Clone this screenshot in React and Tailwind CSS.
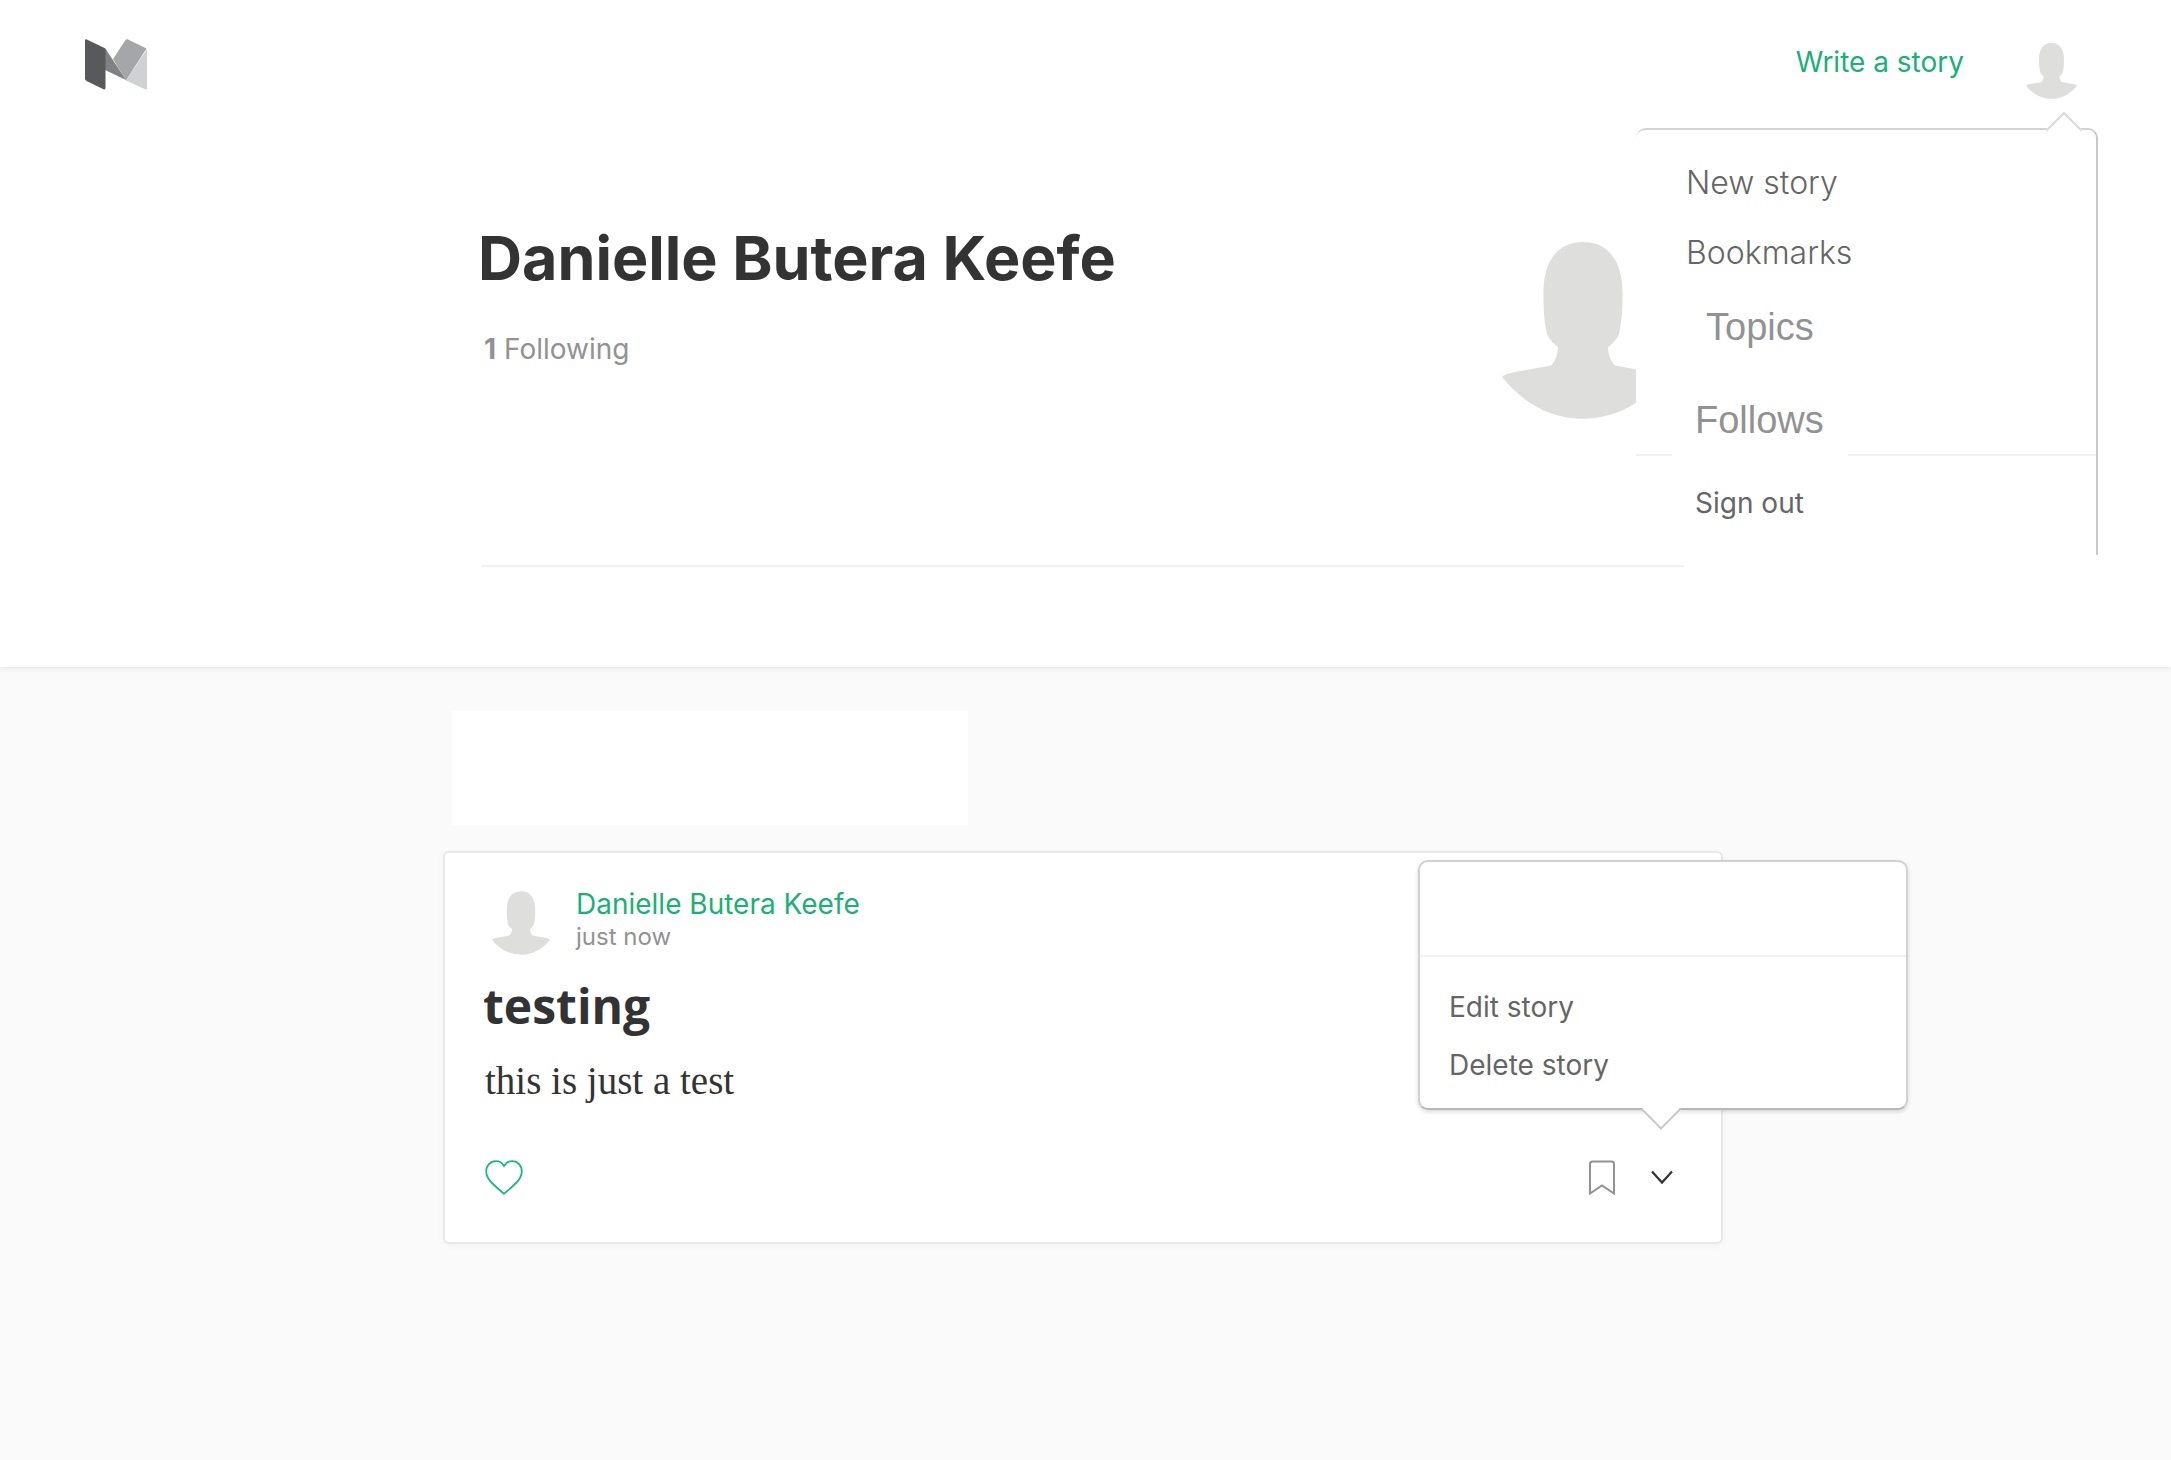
import React from "react";

function Avatar({ className }) {
  return (
    <svg viewBox="67 66 486 532" className={className} fill="#dededc" role="img" aria-label="Danielle Butera Keefe">
      <path d="M310 66C233 66 191 125 191 220C191 270 194 308 201 338C206 360 222 370 235 382C234 405 226 425 214 437L110 456C88 460 74 463 67 472C130 552 215 597 310 597C405 597 490 552 553 472C546 463 532 460 510 456L406 437C394 425 386 405 385 382C398 370 414 360 419 338C426 308 429 270 429 220C429 125 387 66 310 66Z" />
    </svg>
  );
}

function Logo() {
  return (
    <svg viewBox="0 0 62 51" className="h-[51px] w-[62px]" aria-label="Home" role="img">
      <path d="M20 9L41 41L20 31Z" fill="#808184" />
      <path d="M40.500 1Q41.500 -.3 43 .4L61.500 9.500L41 41.500L28 20Z" fill="#a5a6a9" />
      <path d="M62 10L62 49Q62 51 60 50.200L41 41.500Z" fill="#d0d1d3" />
      <path d="M0 1.500Q0 -.2 1.800 .5L19.500 9Q20.500 9.500 20.500 11L20.500 49Q20.500 51 18.500 50.200L1.500 42Q0 41.200 0 39.500Z" fill="#58595b" />
    </svg>
  );
}

function UserMenu() {
  return (
    <nav
      aria-label="Account"
      className="absolute top-[128px] right-[73px] z-10 h-[427px] w-[462px] rounded-t-[10px] border-t-2 border-r-2 border-t-[#d2d2d2] border-r-[#c8c8c8] bg-white pt-[33px]"
    >
      <span className="absolute -top-[13px] right-[19px] size-[26px] rotate-45 border-t-2 border-l-2 border-[#dadada] bg-white" />
      <ul className="flex flex-col pl-[50px]">
        <li className="text-[32px] leading-[40px] font-light text-[#666]">
          <a href="#new">New story</a>
        </li>
        <li className="mt-[30px] text-[32px] leading-[40px] font-light text-[#666]">
          <a href="#bookmarks">Bookmarks</a>
        </li>
        <li className="mt-[30px] pl-5 font-['Liberation_Sans',sans-serif] text-[38px] leading-[48px] text-[#929292]">
          <a href="#topics">Topics</a>
        </li>
        <li className="mt-[45px] pl-[9px] font-['Liberation_Sans',sans-serif] text-[38px] leading-[48px] text-[#929292]">
          <a href="#follows">Follows</a>
        </li>
      </ul>
      <div className="mt-2.5 flex justify-between">
        <span className="h-0.5 w-9 bg-[#f1f1f1]" />
        <span className="h-0.5 w-[248px] bg-[#f1f1f1]" />
      </div>
      <button type="button" className="mt-[27px] ml-[59px] text-[28px] leading-[40px] text-[#666]">
        Sign out
      </button>
    </nav>
  );
}

function StoryMenu() {
  return (
    <div className="absolute top-[7px] -right-[187px] z-10 h-[250px] w-[490px] rounded-[10px] border-2 border-[#d2d2d2] border-b-[#b8b8b8] bg-white shadow-[0_2px_4px_rgba(0,0,0,0.14)]">
      <div className="h-[95px] border-b-2 border-[#f1f1f1]" />
      <ul className="flex flex-col gap-[18px] pt-[30px] pl-[29px] text-[28px] leading-[40px] text-[#666]">
        <li>
          <button type="button">Edit story</button>
        </li>
        <li>
          <button type="button">Delete story</button>
        </li>
      </ul>
      <span className="absolute -bottom-[16px] left-[227px] size-[28px] rotate-45 border-r-2 border-b-2 border-[#c8c8c8] bg-white" />
    </div>
  );
}

function StoryCard() {
  return (
    <article className="relative rounded-[6px] border-2 border-[#e8e8e8] bg-white px-[38px] pt-8 pb-[46px] shadow-[0_2px_8px_rgba(0,0,0,0.03)]">
      <header className="flex pl-[9px]">
        <Avatar className="mt-1.5 h-16 w-[58px]" />
        <div className="ml-[26px]">
          <a href="#author" className="block text-[28px] leading-[38px] text-[#1bb076]">
            Danielle Butera Keefe
          </a>
          <p className="text-[24px] leading-[28px] text-[#929292]">just now</p>
        </div>
      </header>
      <h2 className="mt-[21px] font-['Open_Sans',sans-serif] text-[48px] leading-[60px] font-bold text-[#333]">testing</h2>
      <p className="mt-5 pl-0.5 font-['Liberation_Serif',serif] text-[39px] leading-[50px] text-[#333]">this is just a test</p>
      <footer className="mt-[54px] flex h-9 items-start justify-between">
        <button type="button" aria-label="Recommend" className="ml-0.5">
          <svg viewBox="0 0 38 35" className="h-[35px] w-[38px]" fill="none" stroke="#1fb97c" strokeWidth="1.800">
            <path d="M19 6C17 2.500 14 1.200 10.800 1.200C5.300 1.200 1.200 5.500 1.200 11.500C1.200 16 3.500 19.500 7 23C10.500 26.500 15 30.500 19 33.800C23 30.500 27.500 26.500 31 23C34.500 19.500 36.800 16 36.800 11.500C36.800 5.500 32.700 1.200 27.200 1.200C24 1.200 21 2.500 19 6Z" />
          </svg>
        </button>
        <div className="flex gap-9 pr-2.5">
          <button type="button" aria-label="Bookmark">
            <svg viewBox="0 0 26 35" className="h-[35px] w-[26px]" fill="none" stroke="#929292" strokeWidth="2">
              <path d="M1 33.500V4Q1 1.500 3.500 1.500H22.500Q25 1.500 25 4V33.500L13 25.500Z" />
            </svg>
          </button>
          <button type="button" aria-label="More">
            <svg viewBox="0 0 22 35" className="h-[35px] w-[22px]" fill="none" stroke="#333" strokeWidth="2.200">
              <path d="M1 11.500L11 22.500L21 11.500" />
            </svg>
          </button>
        </div>
      </footer>
      <StoryMenu />
    </article>
  );
}

export default function App() {
  return (
    <div className="min-h-screen bg-[#fafafa] font-['Inter',sans-serif]">
      <header className="relative bg-white pb-[100px] shadow-[0_2px_5px_rgba(0,0,0,0.08)]">
        <div className="flex h-32 items-center pr-[94px] pl-[85px]">
          <a href="#home">
            <Logo />
          </a>
          <a href="#write" className="mr-[62px] ml-auto pb-1 text-[28px] leading-[40px] text-[#1bb076]">
            Write a story
          </a>
          <button type="button" aria-label="Account menu" className="mt-[14px]">
            <Avatar className="h-14 w-[51px]" />
          </button>
        </div>
        <UserMenu />
        <div className="pr-[5px]">
          <section className="mx-auto flex h-[439px] max-w-[1202px] justify-between border-b-2 border-[#f1f1f1]">
            <div className="pt-[94px]">
              <h1 className="-ml-1 text-[61px] leading-[72px] font-bold text-[#333]">Danielle Butera Keefe</h1>
              <p className="mt-[35px] pl-0.5 text-[28px] leading-[40px] text-[#929292]">
                <strong className="font-bold">1</strong> Following
              </p>
            </div>
            <Avatar className="mt-[114px] mr-5 h-[177px] w-[162px]" />
          </section>
        </div>
      </header>
      <main className="pt-11 pr-[5px]">
        <div className="mx-auto max-w-[1280px]">
          <div className="ml-[9px] h-[114px] w-[516px] bg-white" />
          <div className="pt-[26px]">
            <StoryCard />
          </div>
        </div>
      </main>
    </div>
  );
}
